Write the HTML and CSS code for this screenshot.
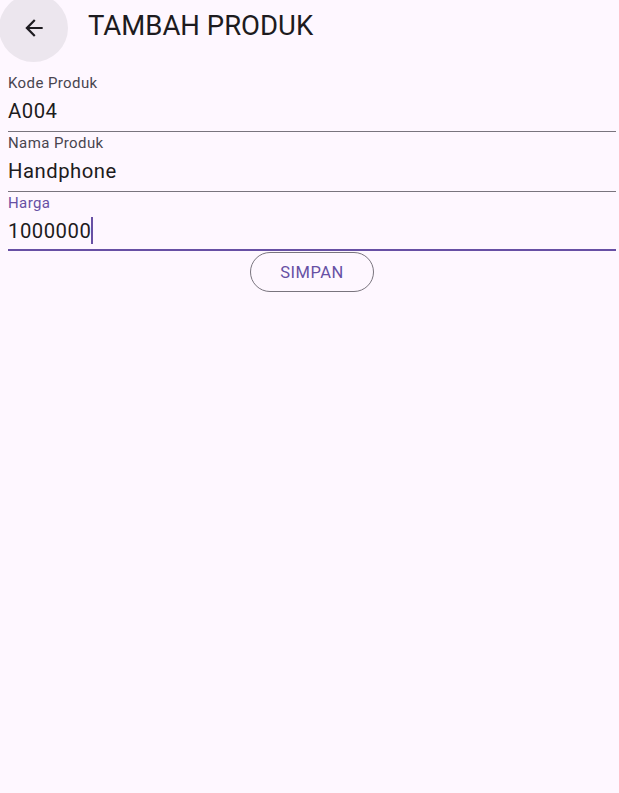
FILE: index.html
```html
<!DOCTYPE html>
<html lang="id">
<head>
<meta charset="utf-8">
<title>Tambah Produk</title>
<link rel="stylesheet" href="styles.css">
</head>
<body>
<header class="appbar">
  <button class="back" aria-label="Kembali">
    <svg viewBox="0 0 24 24" width="26" height="26"><path d="M20 11H7.83l5.59-5.59L12 4l-8 8 8 8 1.41-1.41L7.83 13H20v-2z" fill="#1d1b20"/></svg>
  </button>
  <h1 class="title">TAMBAH PRODUK</h1>
</header>
<main class="form">
  <div class="field">
    <div class="label">Kode Produk</div>
    <div class="value">A004</div>
  </div>
  <div class="field">
    <div class="label">Nama Produk</div>
    <div class="value">Handphone</div>
  </div>
  <div class="field focused">
    <div class="label">Harga</div>
    <div class="value">1000000<span class="caret"></span></div>
  </div>
  <div class="actions">
    <button class="btn">SIMPAN</button>
  </div>
</main>
</body>
</html>
```
FILE: styles.css
```css
html, body {
  margin: 0;
  padding: 0;
  background: #fef7ff;
  font-family: Roboto, "Noto Sans", sans-serif;
  color: #1d1b20;
  height: 100%;
  overflow: hidden;
}
.appbar {
  height: 62px;
  display: flex;
  align-items: center;
  position: relative;
}
.back {
  position: absolute;
  left: -1px;
  top: -6px;
  width: 69px;
  height: 68px;
  border-radius: 50%;
  border: none;
  background: #ece6ee;
  display: flex;
  align-items: center;
  justify-content: center;
  padding: 0;
}
.title {
  margin: 0 0 10px 88px;
  font-weight: 400;
  font-size: 27.5px;
  line-height: 32px;
  letter-spacing: 0;
  color: #1d1b20;
}
.form {
  padding: 10px 3px 0 8px;
}
.field {
  border-bottom: 1px solid #79747e;
  padding-bottom: 5px;
}
.label {
  font-size: 15px;
  line-height: 14px;
  letter-spacing: 0.4px;
  color: #49454f;
  padding-top: 4px;
}
.value {
  font-size: 20.3px;
  line-height: 29px;
  letter-spacing: 0.5px;
  color: #1d1b20;
  padding-top: 7px;
}
.field.focused {
  border-bottom: 2px solid #6750a4;
  padding-bottom: 3px;
}
.field.focused .label {
  color: #6750a4;
}
.caret {
  display: inline-block;
  width: 2px;
  height: 27px;
  background: #6750a4;
  vertical-align: -6px;
}
.actions {
  display: flex;
  justify-content: center;
  padding-top: 1px;
}
.btn {
  width: 124px;
  height: 40px;
  border: 1px solid #79747e;
  border-radius: 20px;
  background: transparent;
  color: #6750a4;
  font-family: Roboto, sans-serif;
  font-size: 16.5px;
  letter-spacing: 0.5px;
  padding: 0;
}
```
